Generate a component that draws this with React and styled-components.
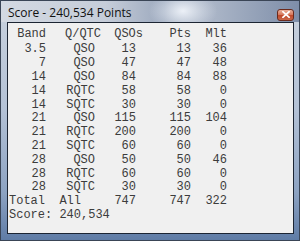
import React from "react";
import styled, { createGlobalStyle } from "styled-components";

const GlobalStyle = createGlobalStyle`
  html, body {
    margin: 0;
    padding: 0;
    background: #ffffff;
  }
  * {
    box-sizing: border-box;
  }
`;

const Window = styled.div`
  width: 300px;
  height: 241px;
  display: flex;
  flex-direction: column;
  border: 1px solid #3a4556;
  background: linear-gradient(
    to bottom,
    #c9d2de 0%,
    #b4c2d6 45%,
    #8da3c2 80%,
    #5f7ca6 100%
  );
  overflow: hidden;
`;

const TitleBar = styled.div`
  height: 21px;
  flex: none;
  display: flex;
  align-items: center;
  justify-content: space-between;
  padding: 0 5px 0 7px;
  background: radial-gradient(
      ellipse 34px 22px at 182px 10px,
      rgba(240, 244, 250, 0.95),
      rgba(240, 244, 250, 0) 100%
    ),
    linear-gradient(
      to right,
      #d3d9e2 0%,
      #c6cdd9 35%,
      #9ba8bd 55%,
      #a9b4c6 72%,
      #7e8ea9 100%
    );
`;

const Title = styled.span`
  font-family: "Open Sans", "Liberation Sans", sans-serif;
  font-size: 12px;
  color: #111;
  line-height: 14px;
  padding-top: 2px;
`;

const CloseButton = styled.div`
  width: 17px;
  height: 12px;
  margin-top: 6px;
  border-radius: 3px;
  border: 1px solid #6b2a1c;
  background: linear-gradient(to bottom, #eab19c 0%, #d77a5e 45%, #bf4a2c 55%, #c9684a 100%);
  display: flex;
  align-items: center;
  justify-content: center;
`;

const Body = styled.div`
  flex: 1;
  margin: 0 5px 6px 6px;
  border: 1px solid #1c2533;
  background: #f0f0f0;
  padding-top: 5px;
`;

const Table = styled.div`
  display: grid;
  grid-template-columns: 38px 55px 42px 48px 36px;
  font-family: "Liberation Mono", "Courier New", monospace;
  font-size: 12px;
  line-height: 13.8px;
  color: #3c3c3c;
`;

const Cell = styled.div`
  white-space: pre;
  text-align: ${(p) => (p.$left ? "left" : "right")};
  padding-right: ${(p) => p.$pad || 0}px;
  padding-left: ${(p) => (p.$left ? 1 : 0)}px;
  padding-bottom: ${(p) => (p.$head ? 1.6 : 0)}px;
`;

const ScoreLine = styled.div`
  grid-column: 1 / -1;
  white-space: pre;
  padding-left: 1px;
`;

const rows = [
  ["3.5", "QSO", 13, 13, 36],
  ["7", "QSO", 47, 47, 48],
  ["14", "QSO", 84, 84, 88],
  ["14", "RQTC", 58, 58, 0],
  ["14", "SQTC", 30, 30, 0],
  ["21", "QSO", 115, 115, 104],
  ["21", "RQTC", 200, 200, 0],
  ["21", "SQTC", 60, 60, 0],
  ["28", "QSO", 50, 50, 46],
  ["28", "RQTC", 60, 60, 0],
  ["28", "SQTC", 30, 30, 0],
];

function CloseIcon() {
  return (
    <svg width="8" height="7" viewBox="0 0 8 7">
      <path
        d="M1 0.8 L7 6.2 M7 0.8 L1 6.2"
        stroke="#ffffff"
        strokeWidth="1.8"
        strokeLinecap="square"
      />
    </svg>
  );
}

export default function App() {
  return (
    <>
      <GlobalStyle />
      <Window>
        <TitleBar>
          <Title>Score - 240,534 Points</Title>
          <CloseButton>
            <CloseIcon />
          </CloseButton>
        </TitleBar>
        <Body>
          <Table>
            <Cell $head>Band</Cell>
            <Cell $head>Q/QTC</Cell>
            <Cell $head>QSOs</Cell>
            <Cell $head>Pts</Cell>
            <Cell $head>Mlt</Cell>
            {rows.map((r, i) => (
              <React.Fragment key={i}>
                <Cell>{r[0]}</Cell>
                <Cell $pad={6}>{r[1]}</Cell>
                <Cell $pad={7}>{r[2]}</Cell>
                <Cell>{r[3]}</Cell>
                <Cell>{r[4]}</Cell>
              </React.Fragment>
            ))}
            <Cell $left>Total</Cell>
            <Cell $pad={20}>All</Cell>
            <Cell $pad={7}>747</Cell>
            <Cell>747</Cell>
            <Cell>322</Cell>
            <ScoreLine>Score: 240,534</ScoreLine>
          </Table>
        </Body>
      </Window>
    </>
  );
}
